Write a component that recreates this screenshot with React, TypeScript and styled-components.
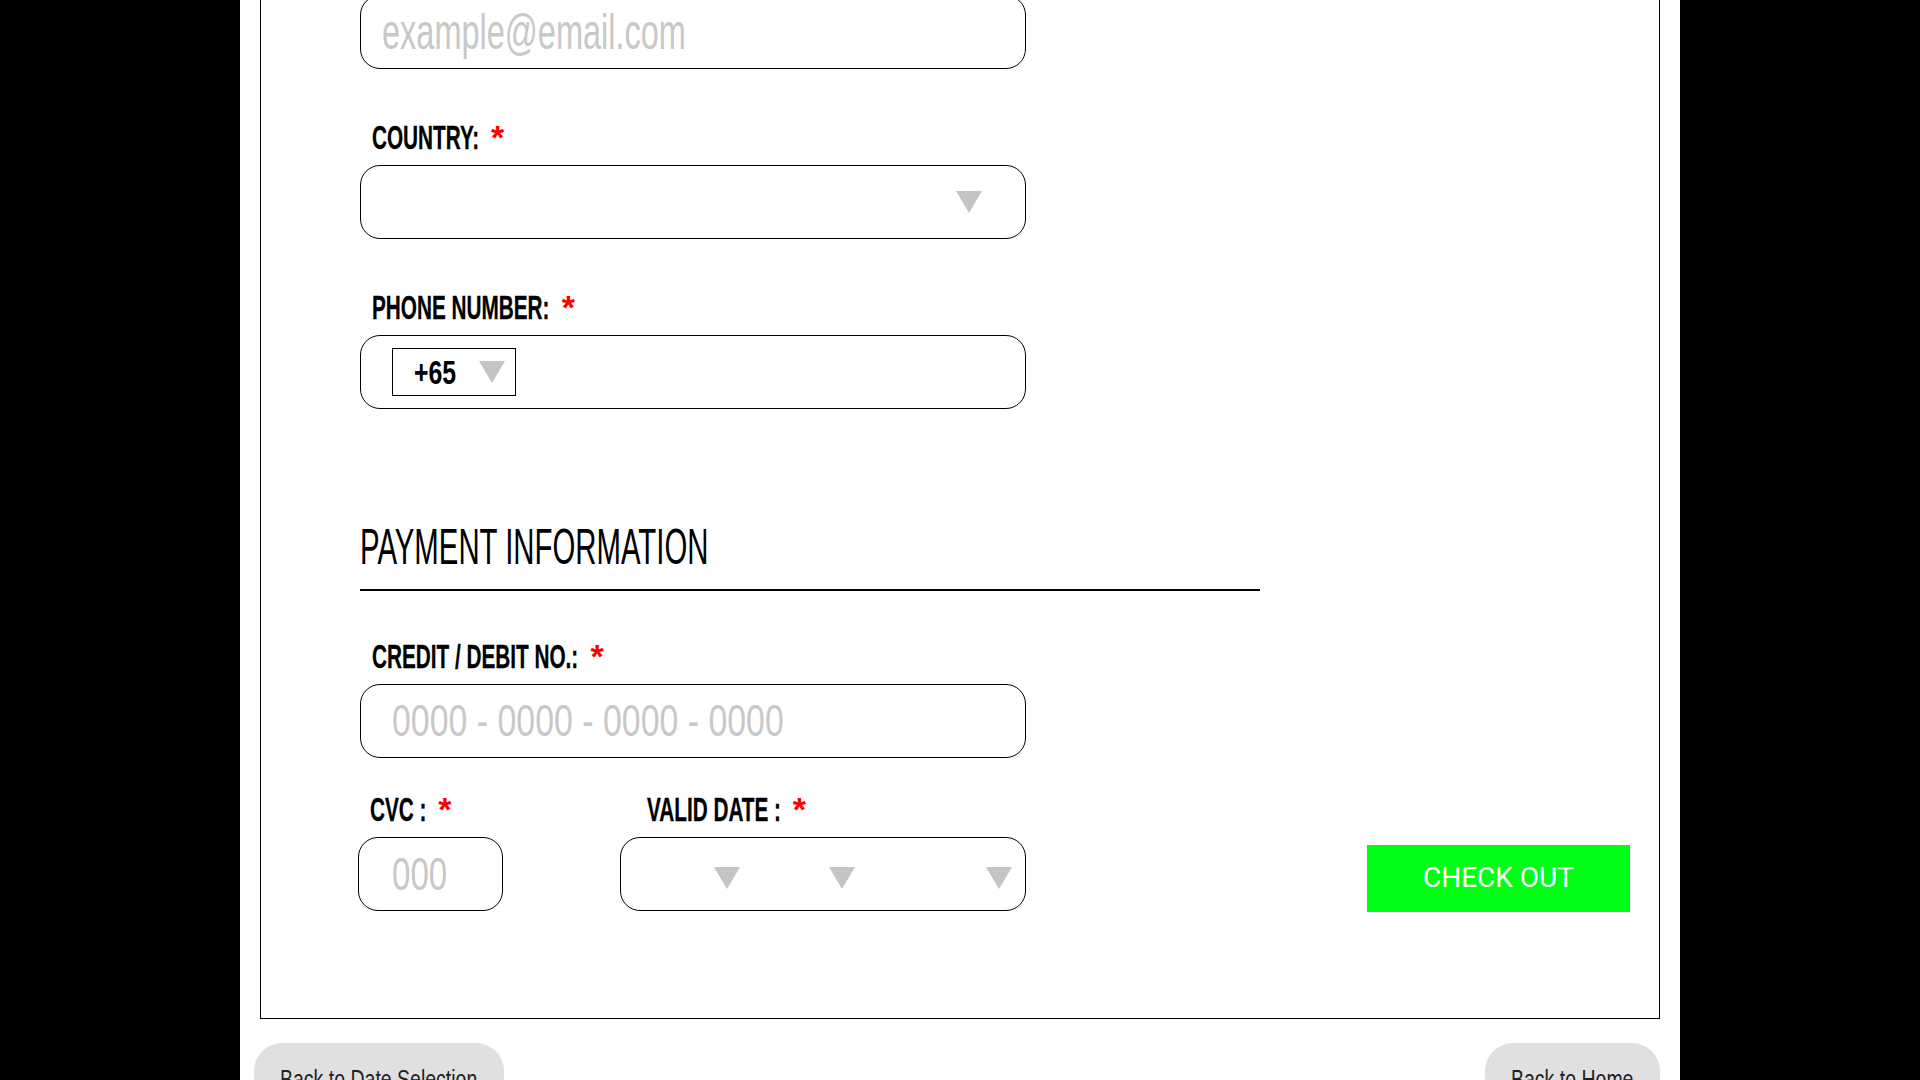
import React from "react";
import styled, { createGlobalStyle } from "styled-components";

const GlobalStyle = createGlobalStyle`
  html, body {
    margin: 0;
    padding: 0;
    background: #000;
    overflow: hidden;
  }
  body {
    font-family: "Liberation Sans", Arial, sans-serif;
  }
  *, *::before, *::after {
    box-sizing: border-box;
  }
`;

const LABEL_X = 0.61;

const Page = styled.div`
  width: 1440px;
  min-height: 100vh;
  margin: 0 auto;
  padding: 0 20px;
  background: #fff;
`;

const Panel = styled.section`
  margin-top: -30px;
  border: 1px solid #000;
  padding: 23.6px 29px 107px 99px;
  display: flex;
  flex-direction: column;
`;

const Squeeze = styled.span<{ $x: number }>`
  display: inline-block;
  white-space: nowrap;
  transform: scaleX(${(p) => p.$x});
  transform-origin: 0 50%;
`;

const Group = styled.div<{ $mt?: number; $ml?: number; $w?: number }>`
  display: flex;
  flex-direction: column;
  gap: 11px;
  margin-top: ${(p) => p.$mt ?? 0}px;
  margin-left: ${(p) => p.$ml ?? 0}px;
  ${(p) => (p.$w ? `width: ${p.$w}px;` : "")}
`;

const Label = styled.label<{ $indent?: number }>`
  display: block;
  height: 34px;
  padding-left: ${(p) => p.$indent ?? 12}px;
  font: 700 34px/34px "Liberation Sans", Arial, sans-serif;
  color: #000;
  white-space: nowrap;
  -webkit-text-stroke: 0.3px #000;
`;

const Req = styled.span<{ $x: number }>`
  display: inline-block;
  margin-left: ${(p) => 12 / p.$x}px;
  color: #ff0000;
  -webkit-text-stroke: 0;
  transform: scaleX(${(p) => 1 / p.$x});
  transform-origin: 0 50%;
`;

const Field = styled.div<{ $w?: number; $pl?: number; $pr?: number; $end?: boolean }>`
  width: ${(p) => p.$w ?? 666}px;
  height: 74px;
  border: 1px solid #000;
  border-radius: 20px;
  background: #fff;
  display: flex;
  align-items: center;
  justify-content: ${(p) => (p.$end ? "flex-end" : "flex-start")};
  padding-left: ${(p) => p.$pl ?? 0}px;
  padding-right: ${(p) => p.$pr ?? 0}px;
  overflow: hidden;
`;

const Placeholder = styled(Squeeze)<{ $size: number }>`
  font-size: ${(p) => p.$size}px;
  line-height: 1;
  font-weight: 400;
  color: #c8c8c8;
`;

const Caret = styled.span`
  flex: none;
  width: 0;
  height: 0;
  border-left: 13px solid transparent;
  border-right: 13px solid transparent;
  border-top: 22px solid #c4c4c4;
`;

const CodeBox = styled.div`
  width: 124px;
  height: 48px;
  border: 1px solid #000;
  display: flex;
  align-items: center;
  justify-content: space-between;
  padding: 0 10px 0 21px;
`;

const CodeText = styled(Squeeze)`
  font: 700 34px/1 "Liberation Sans", Arial, sans-serif;
  color: #000;
`;

const SectionTitle = styled.h2`
  margin: 113px 0 0;
  width: 900px;
  padding-bottom: 17.5px;
  border-bottom: 2px solid #000;
  font: 400 50px/50px "Liberation Sans", Arial, sans-serif;
  color: #000;
`;

const PayRow = styled.div`
  display: flex;
  align-items: flex-end;
  margin-top: 34px;
`;

const Segment = styled.div<{ $w?: number }>`
  height: 100%;
  padding-top: 8px;
  display: flex;
  align-items: center;
  justify-content: flex-end;
  ${(p) => (p.$w ? `width: ${p.$w}px; flex: none;` : "flex: 1;")}
`;

const CheckOut = styled.button`
  margin-left: auto;
  margin-bottom: -1px;
  width: 263px;
  height: 67px;
  border: 0;
  background: #00ff17;
  color: #fff;
  font: 400 28px/1 Roboto, "Liberation Sans", Arial, sans-serif;
  cursor: pointer;
`;

const NavRow = styled.nav`
  display: flex;
  justify-content: space-between;
  margin: 24px 0 0 -6px;
`;

const BackButton = styled.button<{ $w: number }>`
  width: ${(p) => p.$w}px;
  height: 72px;
  padding: 0 26px;
  border: 0;
  border-radius: 28px;
  background: #e0e0e0;
  display: flex;
  align-items: center;
  font: 400 26px/26px "Liberation Sans", Arial, sans-serif;
  color: #222;
  cursor: pointer;
`;

function FieldLabel({ text, indent }: { text: string; indent?: number }) {
  return (
    <Label $indent={indent}>
      <Squeeze $x={LABEL_X}>
        {text}
        <Req $x={LABEL_X}>*</Req>
      </Squeeze>
    </Label>
  );
}

export default function App() {
  return (
    <>
      <GlobalStyle />
      <Page>
        <Panel>
          <Field $pl={21}>
            <Placeholder $x={0.65} $size={50}>
              example@email.com
            </Placeholder>
          </Field>

          <Group $mt={51}>
            <FieldLabel text="COUNTRY:" />
            <Field $end $pr={43}>
              <Caret />
            </Field>
          </Group>

          <Group $mt={51}>
            <FieldLabel text="PHONE NUMBER:" />
            <Field $pl={31}>
              <CodeBox>
                <CodeText $x={0.73}>+65</CodeText>
                <Caret />
              </CodeBox>
            </Field>
          </Group>

          <SectionTitle>
            <Squeeze $x={0.587}>PAYMENT INFORMATION</Squeeze>
          </SectionTitle>

          <Group $mt={47.5}>
            <FieldLabel text="CREDIT / DEBIT NO.:" />
            <Field $pl={31}>
              <Placeholder $x={0.77} $size={44}>
                0000 - 0000 - 0000 - 0000
              </Placeholder>
            </Field>
          </Group>

          <PayRow>
            <Group $ml={-2} $w={145}>
              <FieldLabel text="CVC :" indent={12} />
              <Field $w={145} $pl={33}>
                <Placeholder $x={0.72} $size={46}>
                  000
                </Placeholder>
              </Field>
            </Group>

            <Group $ml={117} $w={406}>
              <FieldLabel text="VALID DATE :" indent={27} />
              <Field $w={406} $pr={13}>
                <Segment $w={118.5}>
                  <Caret />
                </Segment>
                <Segment $w={115.5}>
                  <Caret />
                </Segment>
                <Segment>
                  <Caret />
                </Segment>
              </Field>
            </Group>

            <CheckOut>CHECK OUT</CheckOut>
          </PayRow>
        </Panel>

        <NavRow>
          <BackButton $w={250}>
            <Squeeze $x={0.75}>Back to Date Selection</Squeeze>
          </BackButton>
          <BackButton $w={175}>
            <Squeeze $x={0.75}>Back to Home</Squeeze>
          </BackButton>
        </NavRow>
      </Page>
    </>
  );
}
